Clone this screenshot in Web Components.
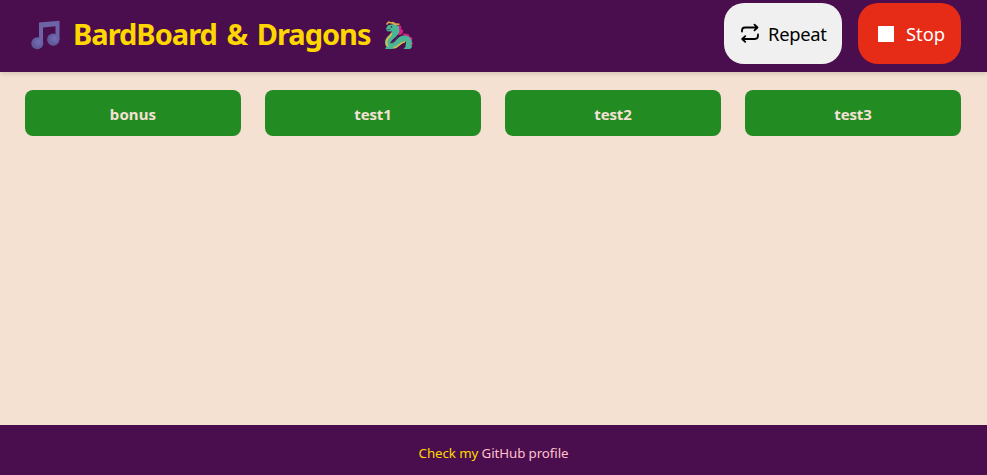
<!DOCTYPE html>
<html lang="en">
<head>
<meta charset="utf-8">
<title>BardBoard &amp; Dragons</title>
<style>
html,body{margin:0;height:100%}
body{font-family:"Noto Sans","Open Sans",sans-serif;background:#f4e1d2;overflow:hidden}
</style>
</head>
<body>
<bard-app></bard-app>
<script>
const define = (name, html) => customElements.define(name, class extends HTMLElement {
  constructor() {
    super();
    this.attachShadow({mode: 'open'}).innerHTML = html;
  }
});

define('note-icon', `<style>:host{display:block;width:30px;height:30px}svg{display:block}</style>
<svg width="30" height="30" viewBox="0 0 30 30">
<defs><radialGradient id="g" cx=".6" cy=".4"><stop stop-color="#776dbb"/><stop offset="1" stop-color="#5f5a96"/></radialGradient></defs>
<path d="M8 2.5 28.5 .8V20H24.5V6.3L12 7.5V24H8Z" fill="#6c64a4"/>
<circle cx="6.3" cy="23.2" r="6" fill="url(#g)"/><circle cx="22.3" cy="19.6" r="6.2" fill="url(#g)"/></svg>`);

define('dragon-icon', `<style>:host{display:block;width:30px;height:30px}svg{display:block}</style>
<svg width="30" height="30" viewBox="0 0 30 30" fill="none">
<path d="M14 5 17.5 6 17 8.5 19.5 11 17.5 14.5 14 15ZM18.5 13.5 24.5 14 25.5 16.5 28.5 18 27.8 21 29 24 27 26 21 18Z" fill="#d3227f"/>
<path d="M11.5 7C14.5 14 8 15 5.2 19C2.4 23 4.5 26.7 9 25.6C14.5 24.4 15 18.3 20 18.3C25 18.3 25.8 22 24 27" stroke="#4bb596" stroke-width="5.8"/>
<path d="M7.8 12.5C7.8 15.5 3 17.5 2.5 21C2 24 3 26 4.5 27.8M9.5 28C15.5 27 16.5 21.7 21 21.9" stroke="#d5be50" stroke-width="1.7"/>
<path d="M6 22.5C9.5 23.5 11 20.5 14.5 16.5" stroke="#4a3c60" stroke-width="1.1"/>
<path d="M2 8.5 4 5.3 10 4 14.5 6 15.5 12 12 15 8 13.5 8 11.5 3 11.3Z" fill="#4bb596"/>
<path d="M2.2 10 6.5 9.3" stroke="#28665f" stroke-width="1"/><circle cx="7.5" cy="6.9" r=".8" fill="#283a3a"/>
<path d="M2.5 4.5 4.5 2.2 9 3.2 12 5.2M8.5 2 11.5 4 15.5 4.3" stroke="#d8a644" stroke-width="1.5"/>
<path d="M1 29 3 26 9 28.5V29ZM19.5 29 22 26H28V27L26 29Z" fill="#4bb596"/></svg>`);

define('repeat-icon', `<style>:host{display:block;margin-top:-2px}svg{display:block}</style>
<svg width="20" height="20" viewBox="0 0 20 20" fill="none" stroke="#000" stroke-width="1.8" stroke-linecap="round" stroke-linejoin="round">
<path d="M2 8.5V7.5Q2 4.5 5 4.5H17M14.5 1.7 17.5 4.5 14.5 7.3M18 11.5V12.5Q18 16 15 16H2.5M5.2 13.2 2.2 16 5.2 18.8"/></svg>`);

define('stop-icon', `<style>:host{display:block;width:16px;height:16px;background:#fff}</style>`);

define('pill-button', `<style>
:host{display:block}
button{box-sizing:border-box;width:100%;height:61px;border:0;border-radius:20px;padding:0 0 0 var(--start,16px);display:flex;align-items:center;background:var(--fill,#f0f0f0);color:var(--ink,#000);font:400 18.4px/26px "Noto Sans","Open Sans",sans-serif;white-space:nowrap}
.label{margin-left:var(--space,8px);letter-spacing:var(--track,0);padding-top:1px}
</style><button><slot name="icon"></slot><span class="label"><slot></slot></span></button>`);

define('board-header', `<style>
:host{display:flex;box-sizing:border-box;height:72px;padding:3px 26px 8px 31px;justify-content:space-between;background:#4a0e4e;box-shadow:0 2px 5px rgba(0,0,0,.13);position:relative}
h1{margin:0;display:flex;align-items:center;height:63px;color:#ffd700;font-size:29px;line-height:40px;font-weight:700;white-space:nowrap}
.title{margin:-2px 0 0 12px;width:299px;letter-spacing:-1px;word-spacing:3px}
dragon-icon{margin-left:12px}
.actions{display:flex;gap:16px}
.repeat{width:118px;--space:8px;--track:-.3px}
.stop{width:103px;--fill:#e62b17;--ink:#fff;--start:20px;--space:12px;--track:-.05px}
</style>
<h1><note-icon></note-icon><span class="title">BardBoard &amp; Dragons</span><dragon-icon></dragon-icon></h1>
<div class="actions">
<pill-button class="repeat"><repeat-icon slot="icon"></repeat-icon>Repeat</pill-button>
<pill-button class="stop"><stop-icon slot="icon"></stop-icon>Stop</pill-button>
</div>`);

define('sound-tile', `<style>
:host{display:block}
button{display:block;width:100%;height:46px;border:0;border-radius:8px;padding:1px 0 0;background:#228b22;color:#f4e1d2;font:700 15px/22px "Noto Sans","Open Sans",sans-serif;letter-spacing:var(--track,-.15px)}
</style><button><slot></slot></button>`);

define('sound-grid', `<style>
:host{display:grid;grid-template-columns:repeat(4,216px);gap:24px;padding:18px 25px;align-content:start}
::slotted(.wide){--track:.1px}
</style><slot></slot>`);

define('board-footer', `<style>
:host{display:flex;box-sizing:border-box;height:50px;padding-top:6px;align-items:center;justify-content:center;background:#4a0e4e;color:#ffd700;font-size:13.33px;line-height:18px;letter-spacing:-.1px}
a{color:#ffc0cb;text-decoration:none}
</style><div>Check my <a href="#">GitHub profile</a></div>`);

define('bard-app', `<style>:host{display:grid;grid-template-rows:72px 1fr 50px;height:100vh}</style>
<board-header></board-header>
<sound-grid><sound-tile class="wide">bonus</sound-tile><sound-tile>test1</sound-tile><sound-tile>test2</sound-tile><sound-tile>test3</sound-tile></sound-grid>
<board-footer></board-footer>`);
</script>
</body>
</html>
